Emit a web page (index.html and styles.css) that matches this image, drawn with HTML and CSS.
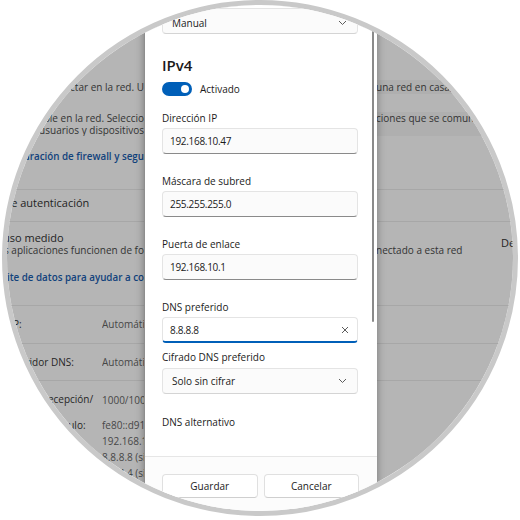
FILE: index.html
```html
<!DOCTYPE html>
<html lang="es">
<head>
  <meta charset="UTF-8">
  <title>Editar configuración de IP</title>
  <link rel="stylesheet" href="styles.css">
</head>
<body>

  <div class="lens">
    <div class="screen">

      <!-- pagina de configuracion atenuada detras del dialogo -->
      <div class="settings">
        <div class="srow r1">
          <div class="lcol"><div class="line end">Otros equipos y dispositivos pueden detectar en la red. U</div></div>
          <div></div>
          <div class="rcol"><div class="line">una red en casa, en el trabajo</div></div>
        </div>

        <div class="srow r2">
          <div class="lcol">
            <div class="line end">Tu PC está visible en la red. Seleccio</div>
            <div class="line end">los usuarios y dispositivos</div>
          </div>
          <div></div>
          <div class="rcol"><div class="line">ciones que se comunican con</div></div>
        </div>

        <div class="srow r3">
          <div class="lcol"><div class="line end link">Configuración de firewall y segu</div></div>
        </div>

        <div class="sep s1"></div>

        <div class="srow r4">
          <div class="lcol"><div class="line title indent">Protocolo de autenticación</div></div>
        </div>

        <div class="sep"></div>

        <div class="srow card">
          <div class="lcol">
            <div class="line title">Conexión de uso medido</div>
            <div class="line sub end">Algunas aplicaciones funcionen de fo</div>
            <div class="line end link gap">Establecer un límite de datos para ayudar a co</div>
          </div>
          <div></div>
          <div class="rcol split">
            <div class="subcol">
              <div class="line title"></div>
              <div class="line sub">nectado a esta red</div>
            </div>
            <div class="line title state">Desactivado</div>
          </div>
        </div>

        <div class="sep"></div>

        <div class="srow prop">
          <div class="lcol kv"><span class="key">Asignación de IP:</span><span class="val">Automático (DHCP)</span></div>
        </div>
        <div class="sep"></div>
        <div class="srow prop">
          <div class="lcol kv"><span class="key">Asignación de servidor DNS:</span><span class="val">Automático (DHCP)</span></div>
        </div>
        <div class="sep"></div>
        <div class="srow prop tall">
          <div class="lcol kv"><span class="key">Velocidad de vínculo (recepción/ transmisión):</span><span class="val">1000/1000 (Mbps)</span></div>
        </div>
        <div class="srow list">
          <div class="lcol kv"><span class="key">Dirección IPv6 local de vínculo:</span><span class="val">fe80::d91c:4a2e:7b1f</span></div>
        </div>
        <div class="srow list">
          <div class="lcol kv"><span class="key">Dirección IPv4:</span><span class="val">192.168.10.47</span></div>
        </div>
        <div class="srow list">
          <div class="lcol kv"><span class="key">Servidores DNS IPv4:</span><span class="val">8.8.8.8 (sin cifrar)</span></div>
        </div>
        <div class="srow list">
          <div class="lcol kv"><span class="key"></span><span class="val">8.8.4.4 (sin cifrar)</span></div>
        </div>
      </div>

      <!-- dialogo de edicion -->
      <div class="dialog">
        <div class="dialog-body">
          <div class="combo first">
            <span>Manual</span>
            <svg width="9" height="6" viewBox="0 0 9 6"><path d="M1 1l3.5 3.5L8 1" fill="none" stroke="#5c5c5c" stroke-width="1"/></svg>
          </div>

          <h2 class="heading">IPv4</h2>

          <div class="toggle-row">
            <span class="toggle"><span class="knob"></span></span>
            <span>Activado</span>
          </div>

          <div class="field">
            <label>Dirección IP</label>
            <div class="textbox">192.168.10.47</div>
          </div>
          <div class="field">
            <label>Máscara de subred</label>
            <div class="textbox">255.255.255.0</div>
          </div>
          <div class="field">
            <label>Puerta de enlace</label>
            <div class="textbox">192.168.10.1</div>
          </div>
          <div class="field">
            <label>DNS preferido</label>
            <div class="textbox focus">
              <span>8.8.8.8</span>
              <svg width="8" height="8" viewBox="0 0 8 8"><path d="M1 1l6 6M7 1L1 7" fill="none" stroke="#5c5c5c" stroke-width="1"/></svg>
            </div>
          </div>
          <div class="field close">
            <label>Cifrado DNS preferido</label>
            <div class="combo">
              <span>Solo sin cifrar</span>
              <svg width="9" height="6" viewBox="0 0 9 6"><path d="M1 1l3.5 3.5L8 1" fill="none" stroke="#5c5c5c" stroke-width="1"/></svg>
            </div>
          </div>
          <div class="field">
            <label>DNS alternativo</label>
          </div>

          <span class="scrollbar"></span>
        </div>

        <div class="dialog-foot">
          <button class="btn">Guardar</button>
          <button class="btn">Cancelar</button>
        </div>
      </div>

    </div>
  </div>

</body>
</html>
```

FILE: styles.css
```css
* { box-sizing: border-box; }
body { margin: 0; background: #fff; font-family: "Open Sans", "Noto Sans", sans-serif; font-size: 10px; color: #1b1b1b; }

/* lupa circular */
.lens { width: 516px; height: 516px; margin: 0 auto; border: 5px solid #c9c9c9; border-radius: 50%; overflow: hidden; }
.screen { position: relative; width: 520px; height: 520px; margin: -5px 0 0 -7px; background: #b5b5b5; }

/* fondo: configuracion */
.settings { width: 610px; margin-left: -64px; padding-top: 80px; color: #333; }
.srow { display: grid; grid-template-columns: 208px 232px 1fr; }
.lcol { overflow: hidden; }
.rcol { background: #afafaf; }
.line { height: 14px; line-height: 14px; white-space: nowrap; }
.end { display: flex; justify-content: flex-end; }
.title { font-size: 11px; color: #1f1f1f; }
.indent { padding-left: 16px; }
.sub { height: 11px; line-height: 11px; font-size: 10px; }
.link { color: #11427c; font-size: 9.8px; font-weight: 600; }
.r2 { margin-top: 18px; }
.r2 .line { height: 12px; line-height: 12px; }
.r3 { margin-top: 14px; }
.sep { height: 1px; background: #a7a7a7; }
.sep.s1 { margin-top: 25px; }
.r4 { height: 31px; padding-top: 6px; }
.card { height: 83px; padding-top: 9px; }
.card .gap { margin-top: 15px; }
.split { display: flex; background: none; }
.subcol { width: 125px; }
.state { margin-top: 5px; }
.prop { height: 37px; padding-top: 11px; }
.prop + .sep + .prop { height: 36px; }
.prop.tall { height: 39px; padding-top: 12px; }
.kv { display: grid; grid-template-columns: 166px 1fr; line-height: 14px; }
.key { padding-left: 7px; color: #262626; }
.val { overflow: hidden; color: #474747; white-space: nowrap; }
.tall .key { line-height: 13px; }
.list { height: 16px; }
.list .kv { line-height: 16px; }

/* dialogo */
.dialog { position: absolute; left: 144px; top: -12px; width: 233px; height: 600px; background: #fff; border-left: 1px solid #8e8e8e; box-shadow: 0 0 8px rgba(0, 0, 0, 0.35); }
.dialog-body { position: relative; height: 468px; padding: 20px 19px 0 17px; overflow: hidden; }
.scrollbar { position: absolute; top: 0; right: 3px; width: 2px; height: 334px; border-radius: 1px; background: #8a8a8a; }

.combo, .textbox { display: flex; align-items: center; justify-content: space-between; height: 26px; padding: 0 8px 0 7px; border: 1px solid #e4e4e4; border-radius: 4px; background: #fbfbfb; color: #1a1a1a; }
.combo { padding: 0 10px 0 9px; border-bottom-color: #d4d4d4; }
.combo.first { padding-top: 3px; }
.textbox { border-bottom-color: #8a8a8a; letter-spacing: -0.3px; }
.textbox.focus { background: #fff; border-bottom: 2px solid #005fb8; }

.heading { margin: 21px 0 0; height: 20px; line-height: 20px; font-size: 15px; font-weight: 600; color: #1a1a1a; }
.toggle-row { display: flex; align-items: center; gap: 8px; height: 14px; margin-top: 7px; }
.toggle { display: flex; align-items: center; justify-content: flex-end; width: 30px; height: 14px; padding-right: 3px; border-radius: 7px; background: #005fb8; }
.knob { width: 8px; height: 8px; border-radius: 50%; background: #fff; }

.field { margin-top: 20px; }
.toggle-row + .field { margin-top: 15px; }
.field label { display: block; height: 14px; line-height: 14px; margin-bottom: 3px; }
.field.close { margin-top: 7px; }
.field.close label { margin-bottom: 4px; }
.field.close + .field { margin-top: 21px; }

.dialog-foot { display: flex; gap: 6px; height: 132px; padding: 17px 18px 0 17px; border-top: 1px solid #e6e6e6; background: #fcfcfc; }
.btn { flex: 1; height: 24px; border: 1px solid #e0e0e0; border-bottom-color: #cfcfcf; border-radius: 4px; background: #fff; font-family: inherit; font-size: 10px; color: #1b1b1b; }
```
